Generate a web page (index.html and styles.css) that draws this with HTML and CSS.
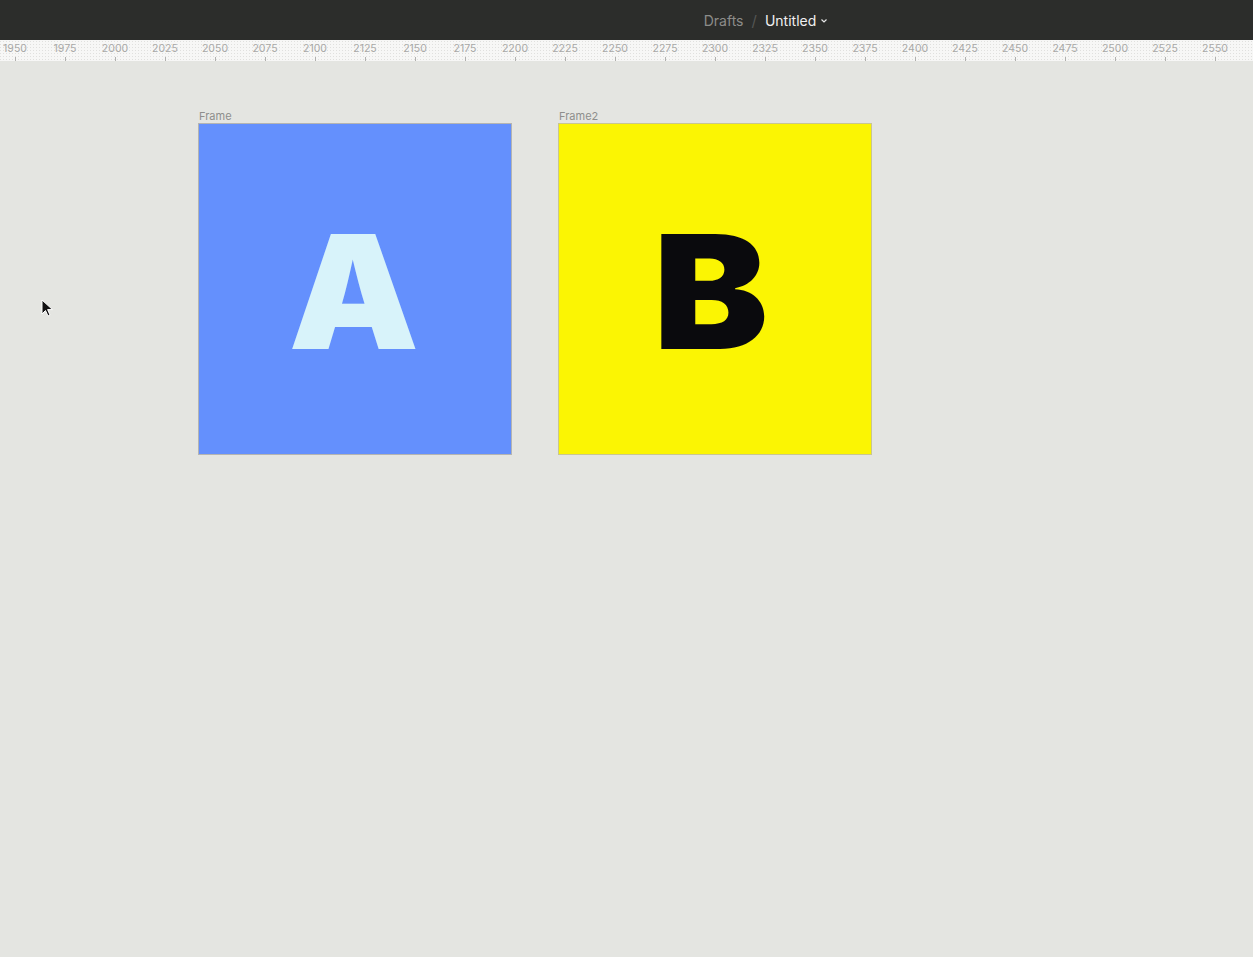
FILE: index.html
```html
<!DOCTYPE html>
<html lang="en">

<head>
    <meta charset="UTF-8">
    <meta name="viewport" content="width=device-width, initial-scale=1.0">
    <title>Untitled</title>
    <link rel="stylesheet" href="styles.css">
</head>

<body>

	<header class="topbar">
		<div class="crumbs">
			<span class="crumb-parent">Drafts</span>
			<span class="crumb-sep">/</span>
			<span class="crumb-title">Untitled</span>
			<svg class="chevron" width="8" height="6" viewBox="0 0 8 6"><path d="M1.5 1.5 L4 4 L6.5 1.5" fill="none" stroke="#e6e6e6" stroke-width="1.2"/></svg>
		</div>
	</header>

	<div class="ruler">
		<span class="mark">1950</span>
		<span class="mark">1975</span>
		<span class="mark">2000</span>
		<span class="mark">2025</span>
		<span class="mark">2050</span>
		<span class="mark">2075</span>
		<span class="mark">2100</span>
		<span class="mark">2125</span>
		<span class="mark">2150</span>
		<span class="mark">2175</span>
		<span class="mark">2200</span>
		<span class="mark">2225</span>
		<span class="mark">2250</span>
		<span class="mark">2275</span>
		<span class="mark">2300</span>
		<span class="mark">2325</span>
		<span class="mark">2350</span>
		<span class="mark">2375</span>
		<span class="mark">2400</span>
		<span class="mark">2425</span>
		<span class="mark">2450</span>
		<span class="mark">2475</span>
		<span class="mark">2500</span>
		<span class="mark">2525</span>
		<span class="mark">2550</span>
	</div>

	<main class="canvas">
		<div class="frames">
			<div class="frame">
				<div class="frame-label">Frame</div>
				<div class="frame-box blue"><span class="glyph">A</span></div>
			</div>
			<div class="frame">
				<div class="frame-label">Frame2</div>
				<div class="frame-box yellow"><span class="glyph">B</span></div>
			</div>
		</div>

		<svg class="cursor" width="14" height="20" viewBox="0 0 14 20">
			<path d="M1 1 L1 15 L4.5 11.5 L7 17 L9 16 L6.6 10.6 L11.5 10.6 Z" fill="#111" stroke="#fff" stroke-width="1"/>
		</svg>
	</main>

</body>
</html>
```

FILE: styles.css
```css
        body {
            font-family: Inter, "Liberation Sans", Arial, sans-serif;
            margin: 0;
            padding: 0;
            background-color: #e4e5e1;
            height: 957px;
            overflow: hidden;
        }

		.topbar {
			height: 40px;
			background-color: #2c2d2b;
			display: flex;
			justify-content: center;
			align-items: center;
		}

		.crumbs {
			display: flex;
			align-items: center;
			gap: 8px;
			font-size: 14px;
			margin-left: 279px;
			padding-top: 1px;
		}

		.crumb-parent {
			color: #8c8c8a;
		}

		.crumb-sep {
			color: #555654;
			font-size: 15px;
		}

		.crumb-title {
			color: #f0f0f0;
		}

		.chevron {
			margin-left: -4px;
			margin-top: 1px;
		}

		.ruler {
			height: 21px;
			background-color: #f7f7f6;
			background-image: radial-gradient(#e0e0de 0.6px, transparent 0.7px);
			background-size: 3px 3px;
			display: flex;
			margin-left: -10px;
			box-sizing: border-box;
		}

		.mark {
			flex: 0 0 50px;
			position: relative;
			text-align: center;
			font-size: 10.5px;
			color: #a8a8a6;
			line-height: 17px;
		}

		.mark::after {
			content: "";
			position: absolute;
			left: 25px;
			bottom: 0;
			width: 1px;
			height: 4px;
			background-color: #b0b0ae;
		}

		.canvas {
			position: relative;
			height: 896px;
		}

		.frames {
			display: flex;
			gap: 46px;
			padding: 49px 0 0 198px;
		}

		.frame-label {
			font-size: 11px;
			color: #8e8e8c;
			padding-left: 1px;
			height: 13px;
			line-height: 12px;
		}

		.frame-box {
			width: 312px;
			height: 330px;
			border: 1px solid #b4b4b2;
			display: flex;
			justify-content: center;
			align-items: center;
		}

		.blue {
			background-color: #6490fd;
		}

		.yellow {
			background-color: #fbf503;
			border-color: #c9c690;
		}

		.glyph {
			font-weight: 900;
			font-size: 158px;
			line-height: 1;
			margin-top: 5px;
		}

		.blue .glyph {
			color: #d8f3fa;
			margin-left: -2px;
			transform: scaleX(1.04);
		}

		.yellow .glyph {
			color: #0a0a0d;
			margin-left: -8px;
			transform: scaleX(1.09);
		}

		.cursor {
			position: absolute;
			left: 41px;
			top: 238px;
		}
```
